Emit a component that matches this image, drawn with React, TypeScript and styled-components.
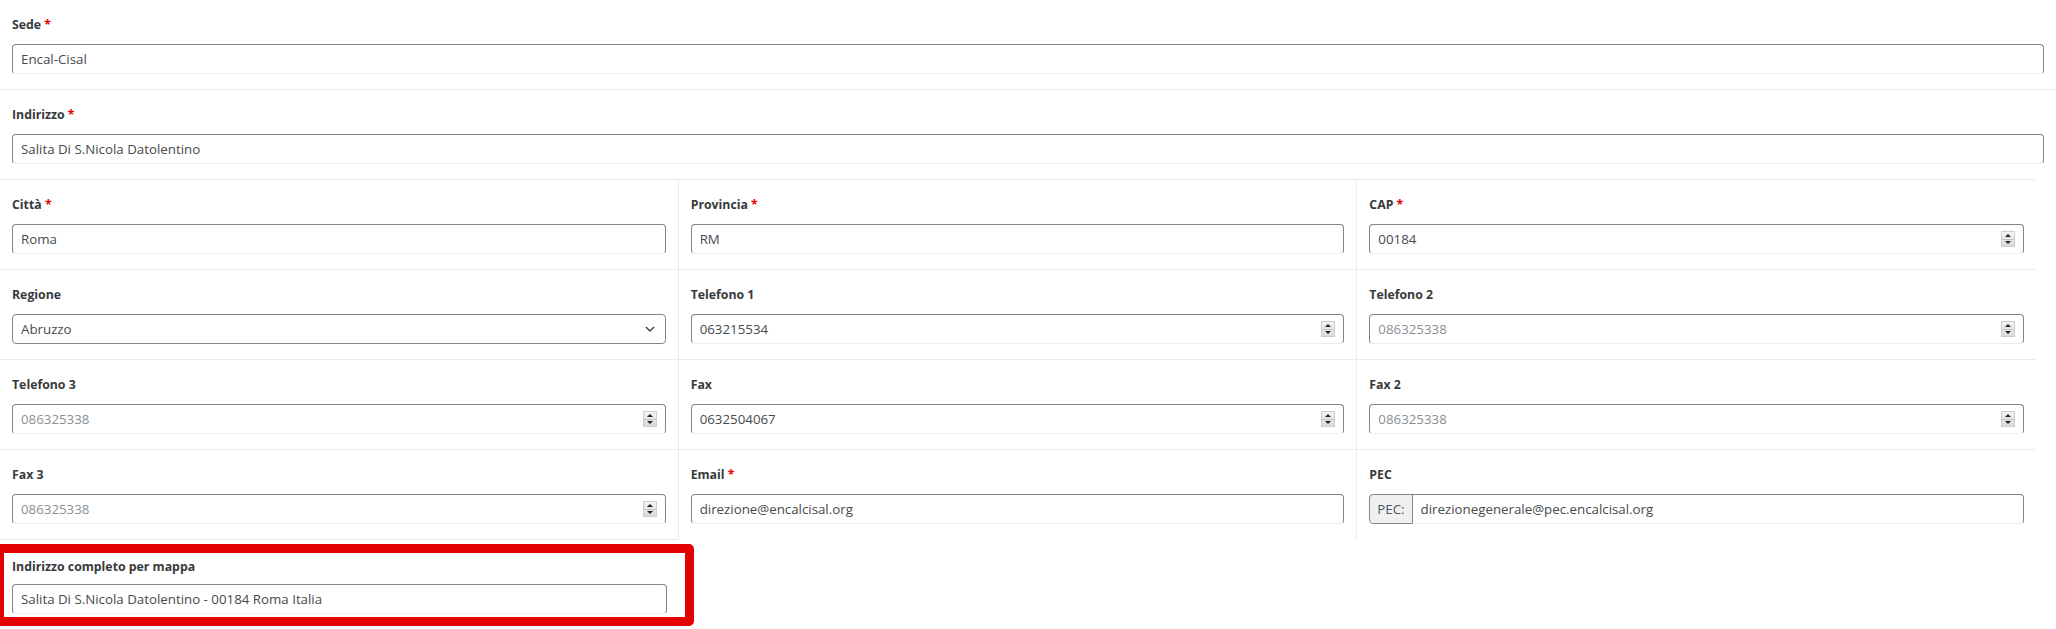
import React from "react";
import styled, { createGlobalStyle } from "styled-components";

type Kind = "text" | "number" | "select" | "pec";

type FieldDef = {
    label: string;
    required?: boolean;
    value?: string;
    placeholder?: string;
    kind?: Kind;
};

const gridRows: FieldDef[][] = [
    [
        { label: "Città", required: true, value: "Roma" },
        { label: "Provincia", required: true, value: "RM" },
        { label: "CAP", required: true, value: "00184", kind: "number" },
    ],
    [
        { label: "Regione", value: "Abruzzo", kind: "select" },
        { label: "Telefono 1", value: "063215534", kind: "number" },
        { label: "Telefono 2", placeholder: "086325338", kind: "number" },
    ],
    [
        { label: "Telefono 3", placeholder: "086325338", kind: "number" },
        { label: "Fax", value: "0632504067", kind: "number" },
        { label: "Fax 2", placeholder: "086325338", kind: "number" },
    ],
    [
        { label: "Fax 3", placeholder: "086325338", kind: "number" },
        { label: "Email", required: true, value: "direzione@encalcisal.org" },
        { label: "PEC", value: "direzionegenerale@pec.encalcisal.org", kind: "pec" },
    ],
];

function Control({ field }: { field: FieldDef }) {
    if (field.kind === "select") {
        return (
            <ControlWrap>
                <Select defaultValue={field.value}>
                    <option>{field.value}</option>
                </Select>
                <Chevron width="10" height="6" viewBox="0 0 10 6">
                    <polyline points="1,1 5,5 9,1" fill="none" stroke="#343a40" strokeWidth="1.4" />
                </Chevron>
            </ControlWrap>
        );
    }
    if (field.kind === "pec") {
        return (
            <Group>
                <Addon>PEC:</Addon>
                <Input $grouped type="text" defaultValue={field.value} />
            </Group>
        );
    }
    return (
        <ControlWrap>
            <Input type="text" defaultValue={field.value} placeholder={field.placeholder} />
            {field.kind === "number" && (
                <Spinner>
                    <SpinHalf />
                    <SpinHalf $down />
                </Spinner>
            )}
        </ControlWrap>
    );
}

function Field({ field, gap = 11 }: { field: FieldDef; gap?: number }) {
    return (
        <>
            <Label $gap={gap}>
                {field.label}
                {field.required && <Star> *</Star>}
            </Label>
            <Control field={field} />
        </>
    );
}

export default function App() {
    return (
        <>
            <GlobalStyle />
            <Page>
                <FullRow>
                    <Field field={{ label: "Sede", required: true, value: "Encal-Cisal" }} />
                </FullRow>
                <Divider />
                <FullRow>
                    <Field field={{ label: "Indirizzo", required: true, value: "Salita Di S.Nicola Datolentino" }} />
                </FullRow>
                <Divider $inset={21} />
                <Grid>
                    {gridRows.map((row, r) =>
                        row.map((field, c) => (
                            <Cell
                                key={field.label}
                                $lastCol={c === 2}
                                $noBottom={r === gridRows.length - 1 && c > 0}
                            >
                                <Field field={field} />
                            </Cell>
                        ))
                    )}
                    <MapSlot>
                        <MapBox>
                            <Field
                                gap={9}
                                field={{
                                    label: "Indirizzo completo per mappa",
                                    value: "Salita Di S.Nicola Datolentino - 00184 Roma Italia",
                                }}
                            />
                        </MapBox>
                    </MapSlot>
                </Grid>
            </Page>
        </>
    );
}

const GlobalStyle = createGlobalStyle`
    body {
        margin: 0;
        background: #fff;
        font-family: "Open Sans", "Noto Sans", sans-serif;
    }
    * { box-sizing: border-box; }
`;

const Page = styled.div`
    width: 100%;
    overflow: hidden;
`;

const FullRow = styled.div`
    padding: 15px 12px;
`;

const Divider = styled.div<{ $inset?: number }>`
    height: 1px;
    background: #ebebeb;
    margin-right: ${({ $inset }) => $inset ?? 0}px;
`;

const Grid = styled.div`
    display: grid;
    grid-template-columns: repeat(3, 1fr);
    width: calc(100% - 20px);
`;

const Cell = styled.div<{ $lastCol: boolean; $noBottom: boolean }>`
    min-width: 0;
    padding: 15px 12px;
    border-right: ${({ $lastCol }) => ($lastCol ? "none" : "1px solid #ebebeb")};
    border-bottom: ${({ $noBottom }) => ($noBottom ? "none" : "1px solid #ebebeb")};
`;

const MapSlot = styled.div`
    min-width: 0;
`;

const MapBox = styled.div`
    width: calc(100% + 20px);
    margin: 4px 0 0 -5px;
    border: 9px solid #e30000;
    border-radius: 5px;
    padding: 4px 18px 3px 8px;
`;

const Label = styled.label<{ $gap: number }>`
    display: block;
    font-size: 12.3px;
    font-weight: 700;
    line-height: 18px;
    padding-top: 1px;
    height: 18px;
    color: #373a3c;
    margin-bottom: ${({ $gap }) => $gap}px;
`;

const Star = styled.span`
    color: #e60000;
`;

const ControlWrap = styled.div`
    position: relative;
`;

const Input = styled.input<{ $grouped?: boolean }>`
    display: block;
    width: 100%;
    height: 30px;
    padding: 0 8px;
    font-family: "Open Sans", "Noto Sans", sans-serif;
    font-size: 13.3px;
    color: #464a4e;
    background: #fff;
    border: 1px solid #80868d;
    border-bottom-color: #eceef0;
    border-radius: ${({ $grouped }) => ($grouped ? "0 4px 4px 0" : "4px")};
    outline: none;
    flex: 1;
    min-width: 0;

    &::placeholder {
        color: #8a8f95;
    }
`;

const Select = styled.select`
    display: block;
    width: 100%;
    height: 30px;
    padding: 0 28px 0 8px;
    font-family: "Open Sans", "Noto Sans", sans-serif;
    font-size: 13.3px;
    color: #464a4e;
    background: #fff;
    border: 1px solid #80868d;
    border-radius: 4px;
    appearance: none;
    outline: none;
`;

const Chevron = styled.svg`
    position: absolute;
    right: 11px;
    top: 50%;
    transform: translateY(-50%);
    pointer-events: none;
`;

const Spinner = styled.span`
    position: absolute;
    right: 9px;
    top: 50%;
    transform: translateY(-50%);
    width: 14px;
    height: 16px;
    display: flex;
    flex-direction: column;
    border: 1px solid #cfcfcf;
    background: linear-gradient(#f3f3f3, #dadada);
`;

const SpinHalf = styled.span<{ $down?: boolean }>`
    flex: 1;
    display: flex;
    align-items: center;
    justify-content: center;
    border-top: ${({ $down }) => ($down ? "1px solid #c4c4c4" : "none")};

    &::before {
        content: "";
        border-left: 3px solid transparent;
        border-right: 3px solid transparent;
        ${({ $down }) => ($down ? "border-top: 3px solid #222;" : "border-bottom: 3px solid #222;")}
    }
`;

const Group = styled.div`
    display: flex;
`;

const Addon = styled.span`
    display: flex;
    align-items: center;
    height: 30px;
    padding: 0 7px;
    font-size: 13.3px;
    color: #505459;
    background: #eff0f1;
    border: 1px solid #80868d;
    border-radius: 4px 0 0 4px;
    margin-right: -1px;
`;
